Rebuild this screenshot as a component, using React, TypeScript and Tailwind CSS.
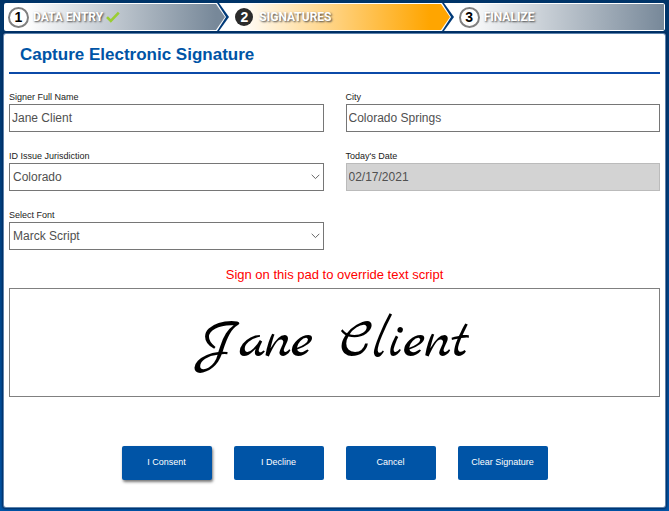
import { useState } from "react";
import type { ReactNode } from "react";

const FONT = "font-['Liberation_Sans',Arial,sans-serif]";

function Chevron({ color }: { color: string }) {
  return (
    <svg
      className="absolute -top-px left-full z-10 h-7 w-[13px]"
      viewBox="0 0 13 28"
      aria-hidden="true"
    >
      <polygon points="0,0 3,0 13,14 3,28 0,28" fill="#003a78" />
      <polygon points="0,0 1,0 10,14 1,28 0,28" fill="#ffffff" />
      <polygon points="0,1 9,14 0,27" fill={color} />
    </svg>
  );
}

type StepProps = {
  number: number;
  label: string;
  className: string;
  active?: boolean;
  tip?: string;
  children?: ReactNode;
};

function Step({ number, label, className, active, tip, children }: StepProps) {
  return (
    <li className={`relative flex h-7 items-center border-y border-white ${className}`}>
      <span
        className={`flex shrink-0 items-center justify-center rounded-full text-[14px] font-bold ${
          active
            ? "size-[18px] bg-[#2b2b2b] text-white"
            : "size-[21px] border-2 border-[#808080] bg-white text-black"
        }`}
      >
        {number}
      </span>
      <span className="font-[Roboto,'Liberation_Sans',sans-serif] text-[12px] leading-4 font-bold text-white [text-shadow:1px_1px_2px_#444]">
        {label}
      </span>
      {children}
      {tip && <Chevron color={tip} />}
    </li>
  );
}

const control =
  "h-7 w-full appearance-none rounded-none border border-[#767676] bg-white text-[12px] text-[#505050] outline-none";

function Field({ id, label, children }: { id: string; label: string; children: ReactNode }) {
  return (
    <div className="flex flex-col">
      <label htmlFor={id} className="pb-px text-[9px] leading-3 text-[#222]">
        {label}
      </label>
      {children}
    </div>
  );
}

function Select({ id, options }: { id: string; options: string[] }) {
  return (
    <div className="relative">
      <select id={id} className={`${control} px-[3px]`}>
        {options.map((o) => (
          <option key={o}>{o}</option>
        ))}
      </select>
      <svg
        className="pointer-events-none absolute top-[11px] right-1 h-[6px] w-[9px]"
        viewBox="0 0 9 6"
        fill="none"
        stroke="#666"
        aria-hidden="true"
      >
        <path d="M.7.8 4.5 4.6 8.3.8" />
      </svg>
    </div>
  );
}

export default function App() {
  const [name, setName] = useState("Jane Client");
  const [city, setCity] = useState("Colorado Springs");

  return (
    <div
      className={`flex min-h-screen flex-col gap-[3px] bg-linear-to-b from-[#003468] to-[#0054a6] px-1 pt-[3px] pb-1 ${FONT}`}
    >
      <ol className="grid grid-cols-[212fr_224fr_224fr] overflow-hidden rounded-xs">
        <Step
          number={1}
          label="DATA ENTRY"
          tip="#778899"
          className="gap-1 bg-linear-to-r/srgb from-white from-10% to-[#778899] pl-1"
        >
          <svg className="-ml-px h-3 w-[14px]" viewBox="0 0 14 12" fill="none" stroke="#9acd32" strokeWidth="2.6" aria-hidden="true">
            <path d="M1 6.2 4.8 10 12.8 1.6" />
          </svg>
        </Step>
        <Step
          number={2}
          label="SIGNATURES"
          active
          tip="#ffa500"
          className="gap-[6px] bg-linear-to-r/srgb from-white from-10% to-[#ffa500] to-95% pl-[19px]"
        />
        <Step
          number={3}
          label="FINALIZE"
          className="gap-1 rounded-r-xs border-r bg-linear-to-r/srgb from-white from-10% to-[#778899] pl-[18px]"
        />
      </ol>

      <main className="flex grow flex-col rounded-xs bg-white px-[5px] shadow-[0_0_0_1px_#5d83ad,0_0_2px_2px_#002c60]">
        <h1 className="border-b-2 border-[#0b4aa8] px-[11px] pt-[9px] pb-[5px] text-[17px] leading-6 font-bold text-[#0054a6]">
          Capture Electronic Signature
        </h1>

        <form className="flex flex-col" onSubmit={(e) => e.preventDefault()}>
          <div className="grid grid-cols-2 gap-x-[22px] gap-y-[18px] pt-[17px]">
            <Field id="signer" label="Signer Full Name">
              <input id="signer" className={`${control} px-[2px]`} value={name} onChange={(e) => setName(e.target.value)} />
            </Field>
            <Field id="city" label="City">
              <input id="city" className={`${control} px-[2px]`} value={city} onChange={(e) => setCity(e.target.value)} />
            </Field>
            <Field id="jurisdiction" label="ID Issue Jurisdiction">
              <Select id="jurisdiction" options={["Colorado"]} />
            </Field>
            <Field id="date" label="Today's Date">
              <input
                id="date"
                readOnly
                className="h-7 w-full rounded-none border border-[#bbb] bg-[#d3d3d3] px-[2px] text-[12px] text-[#505050] outline-none"
                value="02/17/2021"
              />
            </Field>
            <Field id="font" label="Select Font">
              <Select id="font" options={["Marck Script"]} />
            </Field>
          </div>

          <p className="pt-4 pb-1 text-center text-[13px] leading-[18px] text-[#f00]">
            Sign on this pad to override text script
          </p>
          <div className="flex h-[109px] items-center justify-center border border-[#808080] font-['Marck_Script','Liberation_Serif',cursive] text-[56px] leading-none text-black">
            {name}
          </div>

          <div className="flex justify-center gap-[22px] pt-[49px] pb-[27px]">
            {["I Consent", "I Decline", "Cancel", "Clear Signature"].map((label, i) => (
              <button
                key={label}
                type="button"
                className={`h-[34px] w-[90px] rounded-xs bg-[#0054a6] text-[9px] text-white ${
                  i === 0 ? "shadow-[1px_2px_3px_#777]" : ""
                }`}
              >
                {label}
              </button>
            ))}
          </div>
        </form>
      </main>
    </div>
  );
}
